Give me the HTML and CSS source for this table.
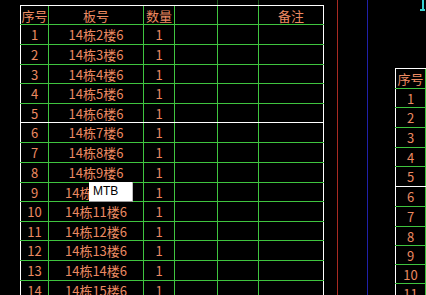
FILE: index.html
```html
<!DOCTYPE html>
<html lang="zh">
<head>
<meta charset="utf-8">
<link rel="stylesheet" href="styles.css">
</head>
<body>
<div class="canvas">
  <div class="tbl left">
    <div class="row top-stub"><div></div><div></div><div></div><div></div><div class="stub"></div><div class="stub"></div></div>
    <div class="row head h19"><div>序号</div><div>板号</div><div>数量</div><div></div><div></div><div>备注</div></div>
    <div class="row h20"><div>1</div><div>14栋2楼6</div><div>1</div><div></div><div></div><div></div></div>
    <div class="row h20"><div>2</div><div>14栋3楼6</div><div>1</div><div></div><div></div><div></div></div>
    <div class="row h19"><div>3</div><div>14栋4楼6</div><div>1</div><div></div><div></div><div></div></div>
    <div class="row h20"><div>4</div><div>14栋5楼6</div><div>1</div><div></div><div></div><div></div></div>
    <div class="row h19"><div>5</div><div>14栋6楼6</div><div>1</div><div></div><div></div><div></div></div>
    <div class="row h20 wtop"><div>6</div><div>14栋7楼6</div><div>1</div><div></div><div></div><div></div></div>
    <div class="row h20"><div>7</div><div>14栋8楼6</div><div>1</div><div></div><div></div><div></div></div>
    <div class="row h20"><div>8</div><div>14栋9楼6</div><div>1</div><div></div><div></div><div></div></div>
    <div class="row h19"><div>9</div><div>14栋10楼6</div><div>1</div><div></div><div></div><div></div></div>
    <div class="row h20"><div>10</div><div>14栋11楼6</div><div>1</div><div></div><div></div><div></div></div>
    <div class="row h19"><div>11</div><div>14栋12楼6</div><div>1</div><div></div><div></div><div></div></div>
    <div class="row h20"><div>12</div><div>14栋13楼6</div><div>1</div><div></div><div></div><div></div></div>
    <div class="row h20"><div>13</div><div>14栋14楼6</div><div>1</div><div></div><div></div><div></div></div>
    <div class="row h20"><div>14</div><div>14栋15楼6</div><div>1</div><div></div><div></div><div></div></div>
  </div>
  <div class="vline red"></div>
  <div class="vline blue"></div>
  <div class="tbl right">
    <div class="row head h20"><div>序号</div><div></div></div>
    <div class="row h19"><div>1</div><div></div></div>
    <div class="row h20"><div>2</div><div></div></div>
    <div class="row h20"><div>3</div><div></div></div>
    <div class="row h19"><div>4</div><div></div></div>
    <div class="row h20"><div>5</div><div></div></div>
    <div class="row h20 wtop"><div>6</div><div></div></div>
    <div class="row h20"><div>7</div><div></div></div>
    <div class="row h19"><div>8</div><div></div></div>
    <div class="row h19"><div>9</div><div></div></div>
    <div class="row h19"><div>10</div><div></div></div>
    <div class="row h20"><div>11</div><div></div></div>
  </div>
  <div class="marker"></div>
  <div class="tip">MTB</div>
</div>
</body>
</html>
```
FILE: styles.css
```css
html, body {
  margin: 0;
  padding: 0;
  background: #000;
  width: 426px;
  height: 295px;
  overflow: hidden;
}
.canvas {
  position: relative;
  display: flex;
  align-items: flex-start;
  width: 426px;
  height: 295px;
  overflow: hidden;
  font-family: "Noto Sans CJK SC", "DejaVu Sans", sans-serif;
  font-size: 13px;
  color: #ec8a62;
}
.tbl {
  flex: none;
}
.left {
  margin-left: 20px;
  width: 304px;
}
.row {
  display: grid;
  box-sizing: border-box;
  border-top: 1px solid #3fc43f;
}
.left .row {
  grid-template-columns: 28px 95px 31px 43px 41px 66px;
}
.row > div {
  box-sizing: border-box;
  border-left: 1px solid #3fc43f;
  display: flex;
  align-items: center;
  justify-content: center;
  line-height: 1;
  white-space: nowrap;
}
.left .row > div:first-child {
  border-left-color: #fff;
}
.left .row > div:last-child {
  border-right: 1px solid #fff;
}
.left .top-stub {
  height: 5px;
  border-top: none;
}
.left .top-stub > div,
.left .top-stub > div:first-child {
  border-left-color: transparent;
}
.left .top-stub > div:last-child {
  border-right-color: transparent;
}
.left .top-stub > .stub {
  border-left-color: #1f5a1f;
}
.head {
  border-top-color: #fff !important;
}
.wtop {
  border-top-color: #fff;
}
.h19 { height: 19px; }
.h20 { height: 20px; }
.vline {
  flex: none;
  width: 1px;
  height: 295px;
}
.red {
  margin-left: 13px;
  background: #a82a22;
}
.blue {
  margin-left: 29px;
  background: #2020a8;
}
.right {
  margin-left: 27px;
  margin-top: 68px;
  width: 40px;
}
.right .row {
  grid-template-columns: 30px 10px;
}
.right .row > div:first-child {
  border-left-color: #fff;
}
.marker {
  position: absolute;
  left: 420px;
  top: 0;
  width: 5px;
  height: 11px;
  border-bottom: 2px solid #3ad0d0;
  box-sizing: border-box;
}
.marker::before {
  content: "";
  position: absolute;
  left: 2px;
  top: 0;
  width: 2px;
  height: 9px;
  background: #3ad0d0;
}
.tip {
  position: absolute;
  left: 89px;
  top: 182px;
  width: 44px;
  height: 20px;
  box-sizing: border-box;
  background: #fff;
  border-bottom: 1px solid #999;
  border-right: 1px solid #bbb;
  color: #000;
  font-family: "Liberation Sans", Arial, sans-serif;
  font-size: 12px;
  line-height: 19px;
  padding-left: 4px;
}
```
